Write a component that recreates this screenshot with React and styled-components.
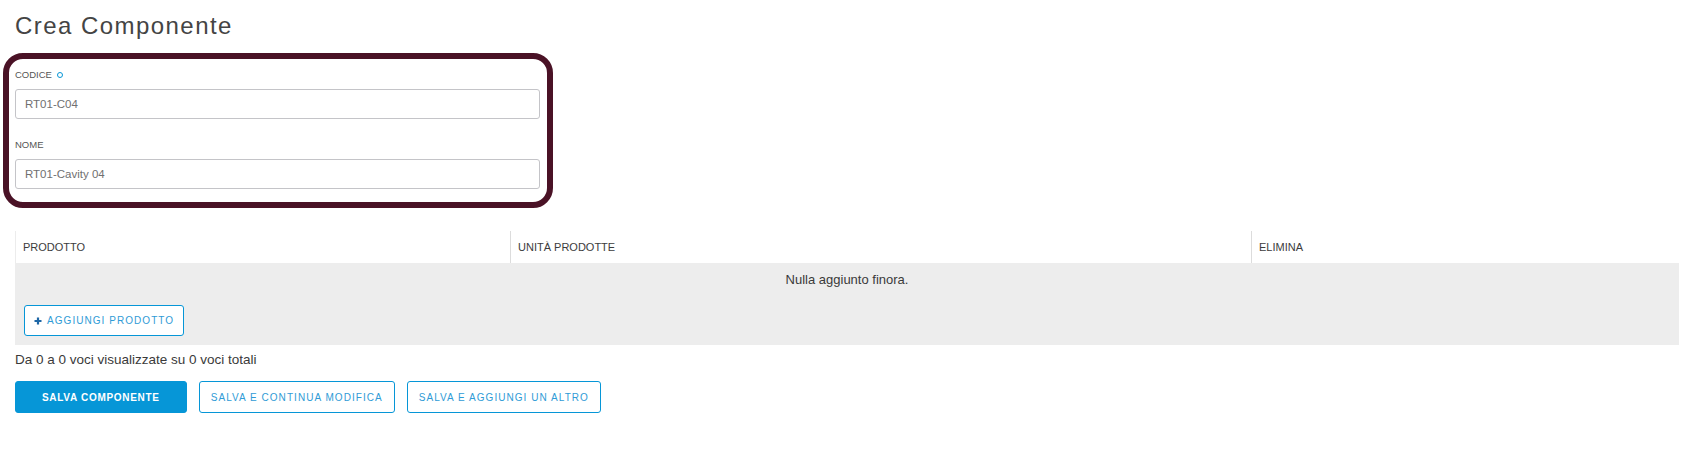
import React from "react";
import styled, { createGlobalStyle } from "styled-components";

const GlobalStyle = createGlobalStyle`
  body {
    margin: 0;
    background: #fff;
    font-family: "Liberation Sans", Arial, sans-serif;
  }
`;

const Page = styled.div`
  padding: 12px 17px 0 15px;
`;

const Title = styled.h1`
  margin: 0;
  font-size: 24px;
  line-height: 28px;
  font-weight: 400;
  color: #444;
  letter-spacing: 1.45px;
`;

/* maroon highlight ring around the two fields */
const FormBox = styled.div`
  box-sizing: border-box;
  width: 550px;
  margin: 13px 0 0 -12px;
  padding: 9px 7px 13px 6px;
  border: 6px solid #4a1226;
  border-radius: 20px;
  display: flex;
  flex-direction: column;
  gap: 19px;
`;

const Field = styled.div`
  display: flex;
  flex-direction: column;
  gap: 8px;
`;

const Label = styled.label`
  display: flex;
  align-items: center;
  gap: 5px;
  height: 13px;
  font-size: 9.5px;
  line-height: 13px;
  color: #555;
  text-transform: uppercase;
`;

const Required = styled.span`
  box-sizing: border-box;
  width: 6px;
  height: 6px;
  border: 1.5px solid #0696d7;
  border-radius: 50%;
`;

const Input = styled.input`
  box-sizing: border-box;
  height: 30px;
  width: 100%;
  padding: 0 9px;
  border: 1px solid #c4c4c8;
  border-radius: 3px;
  font-family: inherit;
  font-size: 11.5px;
  color: #707070;
  background: #fff;
  outline: none;
`;

const Table = styled.div`
  margin-top: 23px;
`;

const HeadRow = styled.div`
  display: grid;
  grid-template-columns: 495px 741px 1fr;
  height: 32px;
  background: #fff;
`;

const HeadCell = styled.div`
  display: flex;
  align-items: center;
  padding-left: 7px;
  border-left: 1px solid ${(p) => (p.$first ? "#ececec" : "#dcdcdc")};
  font-size: 11px;
  color: #3c3c3c;
  text-transform: uppercase;
`;

const Body = styled.div`
  background: #ededed;
`;

const EmptyRow = styled.div`
  height: 32px;
  display: flex;
  align-items: center;
  justify-content: center;
  font-size: 13px;
  color: #3a3a3a;
`;

const ActionRow = styled.div`
  height: 50px;
  box-sizing: border-box;
  padding: 10px 9px 0;
`;

const Button = styled.button`
  box-sizing: border-box;
  display: inline-flex;
  align-items: center;
  justify-content: center;
  gap: 5px;
  height: ${(p) => p.$h || 32}px;
  padding: 0 ${(p) => p.$px || 11}px;
  border-radius: 3px;
  border: 1px solid #0696d7;
  font-family: inherit;
  font-size: 10px;
  text-transform: uppercase;
  cursor: pointer;
  background: ${(p) => (p.$primary ? "#0696d7" : "#fff")};
  color: ${(p) => (p.$primary ? "#fff" : "#2f9bd6")};
  font-weight: ${(p) => (p.$primary ? 700 : 400)};
  letter-spacing: ${(p) => (p.$primary ? 0.7 : 1.05)}px;
`;

const Summary = styled.div`
  margin-top: 7px;
  font-size: 13.5px;
  line-height: 16px;
  color: #3a3a3a;
`;

const ButtonBar = styled.div`
  margin-top: 13px;
  display: flex;
  gap: 12px;
`;

function PlusIcon() {
  return (
    <svg width="8" height="8" viewBox="0 0 8 8">
      <path d="M4 0.5V7.5M0.5 4H7.5" stroke="#1e67a6" strokeWidth="2.2" />
    </svg>
  );
}

function App() {
  return (
    <Page>
      <GlobalStyle />
      <Title>Crea Componente</Title>

      <FormBox>
        <Field>
          <Label>
            Codice <Required />
          </Label>
          <Input defaultValue="RT01-C04" />
        </Field>
        <Field>
          <Label>Nome</Label>
          <Input defaultValue="RT01-Cavity 04" />
        </Field>
      </FormBox>

      <Table>
        <HeadRow>
          <HeadCell $first>Prodotto</HeadCell>
          <HeadCell>Unità prodotte</HeadCell>
          <HeadCell>Elimina</HeadCell>
        </HeadRow>
        <Body>
          <EmptyRow>Nulla aggiunto finora.</EmptyRow>
          <ActionRow>
            <Button $h={31} $px={9}>
              <PlusIcon />
              Aggiungi prodotto
            </Button>
          </ActionRow>
        </Body>
      </Table>

      <Summary>Da 0 a 0 voci visualizzate su 0 voci totali</Summary>

      <ButtonBar>
        <Button $primary $px={26}>
          Salva componente
        </Button>
        <Button>Salva e continua modifica</Button>
        <Button>Salva e aggiungi un altro</Button>
      </ButtonBar>
    </Page>
  );
}

export default App;
